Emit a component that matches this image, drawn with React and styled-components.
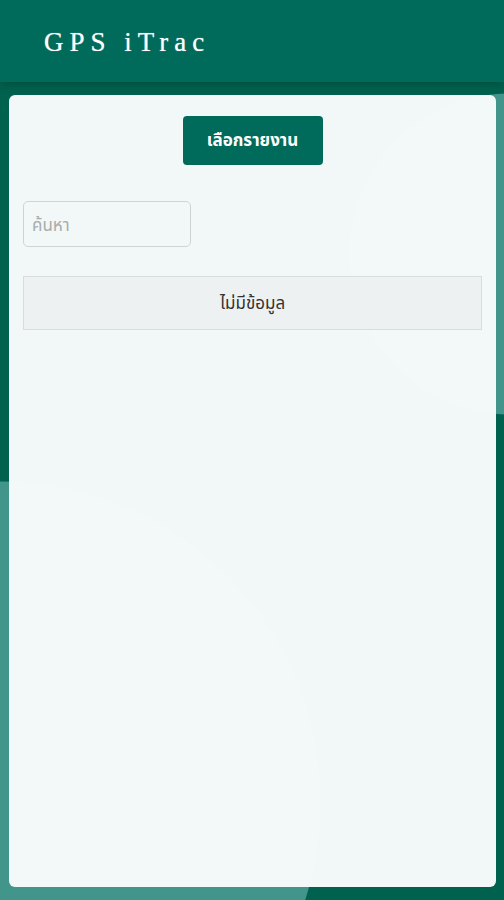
import React from 'react';
import styled, { createGlobalStyle } from 'styled-components';

const GlobalStyle = createGlobalStyle`
  html, body {
    margin: 0;
    padding: 0;
  }
  body {
    font-family: "Noto Sans", "Noto Sans Thai", "DejaVu Sans", sans-serif;
    background:
      radial-gradient(circle at 0px 802px, #42958a 320px, transparent 321px),
      radial-gradient(circle at 510px 254px, #42958a 160px, transparent 161px),
      #00614f;
  }
`;

const Page = styled.div`
  min-height: 900px;
  display: flex;
  flex-direction: column;
`;

const Header = styled.header`
  height: 82px;
  flex-shrink: 0;
  background: #006b5b;
  box-shadow: 0 2px 8px rgba(0, 40, 30, 0.35);
  display: flex;
  align-items: center;
  padding-left: 44px;
  position: relative;
  z-index: 1;
`;

const Brand = styled.div`
  color: #ffffff;
  font-family: "Liberation Serif", "Times New Roman", serif;
  font-size: 27px;
  letter-spacing: 6px;
  margin-top: 2px;
  text-shadow: 0 0 1px rgba(255, 255, 255, 0.6);
`;

const Main = styled.main`
  flex: 1;
  display: flex;
  padding: 13px 8px 13px 9px;
`;

const Card = styled.section`
  flex: 1;
  background: rgba(248, 251, 251, 0.975);
  border-radius: 6px;
  padding: 21px 14px;
  display: flex;
  flex-direction: column;
`;

const Toolbar = styled.div`
  display: flex;
  justify-content: center;
`;

const PrimaryButton = styled.button`
  width: 140px;
  height: 49px;
  background: #006b5b;
  color: #ffffff;
  border: none;
  border-radius: 4px;
  font-family: inherit;
  font-size: 17px;
  font-weight: 700;
  cursor: pointer;
`;

const SearchInput = styled.input`
  margin-top: 36px;
  width: 168px;
  height: 46px;
  box-sizing: border-box;
  border: 1px solid #cfd3d3;
  border-radius: 5px;
  background: transparent;
  padding: 0 8px;
  font-family: inherit;
  font-size: 17px;
  color: #333;
  &::placeholder {
    color: #a9adad;
  }
`;

const EmptyState = styled.div`
  margin-top: 29px;
  height: 54px;
  box-sizing: border-box;
  border: 1px solid #d8dcdc;
  background: #eef1f1;
  display: flex;
  align-items: center;
  justify-content: center;
  padding-top: 2px;
  font-size: 17px;
  color: #333;
`;

const App = () => (
  <>
    <GlobalStyle />
    <Page>
      <Header>
        <Brand>GPS iTrac</Brand>
      </Header>
      <Main>
        <Card>
          <Toolbar>
            <PrimaryButton>เลือกรายงาน</PrimaryButton>
          </Toolbar>
          <SearchInput placeholder="ค้นหา" />
          <EmptyState>ไม่มีข้อมูล</EmptyState>
        </Card>
      </Main>
    </Page>
  </>
);

export default App;
